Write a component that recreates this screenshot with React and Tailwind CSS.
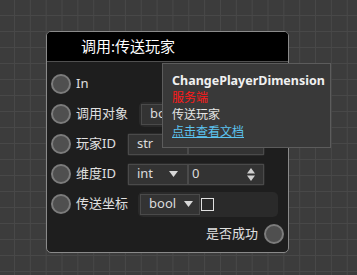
import React from 'react';

// one pin circle on the node edge
const Pin = () => (
  <div className="w-5 h-5 shrink-0 rounded-full border-2 border-[#7c7c7c] bg-[#4f4f4f]" />
);

const Caret = () => (
  <svg width="9" height="6" viewBox="0 0 9 6" className="shrink-0">
    <path d="M0 0 H9 L4.5 6 Z" fill="#d8d8d8" />
  </svg>
);

const Spinner = () => (
  <svg width="8" height="13" viewBox="0 0 8 13" className="shrink-0">
    <path d="M0 5.5 L4 0 L8 5.5 Z" fill="#d0d0d0" />
    <path d="M0 7.5 H8 L4 13 Z" fill="#d0d0d0" />
  </svg>
);

// two-part field: type dropdown + value
const TypeField = ({ type, value, spinner }) => (
  <div className="ml-[11px] flex h-[23px] w-[138px] rounded-[3px] bg-[#2a2a2a] p-[1px]">
    <div className="flex w-[60px] items-center justify-between border border-[#4a4a4a] bg-[#333333] pl-[8px] pr-[9px] text-[13px] text-[#dcdcdc]">
      <span>{type}</span>
      <Caret />
    </div>
    <div className="flex flex-1 items-center justify-between border border-[#4a4a4a] bg-[#333333] pl-[3px] pr-[8px] text-[13px] text-[#dcdcdc]">
      <span>{value}</span>
      {spinner && <Spinner />}
    </div>
  </div>
);

const BoolField = ({ ml }) => (
  <div className={`${ml} flex h-[25px] w-[140px] items-center rounded-[5px] bg-[#2a2a2a] pl-[2px]`}>
    <div className="flex h-[21px] w-[60px] items-center justify-between border border-[#4a4a4a] bg-[#333333] pl-[8px] pr-[6px] text-[13px] text-[#dcdcdc]">
      <span>bool</span>
      <Caret />
    </div>
    <div className="ml-[1px] h-[13px] w-[13px] border border-[#e0e0e0]" />
  </div>
);

const Row = ({ children }) => (
  <div className="flex h-[30px] items-center pl-[4px]">{children}</div>
);

export default function App() {
  return (
    <div className="relative h-[275px] w-full overflow-hidden bg-[#3c3c3c] bg-[linear-gradient(to_right,#484848_1px,transparent_1px),linear-gradient(to_bottom,#484848_1px,transparent_1px)] bg-[size:15.85px_16px] bg-[position:14px_15px] font-['Noto_Sans','Noto_Sans_CJK_SC',sans-serif]">
      {/* node */}
      <div className="absolute left-[46px] top-[31px] h-[222px] w-[243px] overflow-hidden rounded-[5px] border border-[#8a8a8a] bg-[#1e1e1e]">
        <div className="flex h-[30px] items-center border-b border-[#505050] bg-black pl-[34px] text-[15px] text-white">
          调用:传送玩家
        </div>
        <div className="pt-[7px] text-[13px] text-[#e0e0e0]">
          <Row>
            <Pin />
            <span className="ml-[5px]">In</span>
          </Row>
          <Row>
            <Pin />
            <span className="ml-[5px]">调用对象</span>
            <BoolField ml="ml-[11px]" />
          </Row>
          <Row>
            <Pin />
            <span className="ml-[5px]">玩家ID</span>
            <TypeField type="str" value="" />
          </Row>
          <Row>
            <Pin />
            <span className="ml-[5px]">维度ID</span>
            <TypeField type="int" value="0" spinner />
          </Row>
          <Row>
            <Pin />
            <span className="ml-[5px]">传送坐标</span>
            <BoolField ml="ml-[10px]" />
          </Row>
          <div className="flex h-[30px] items-center justify-end gap-[6px] pr-[4px]">
            <span>是否成功</span>
            <Pin />
          </div>
        </div>
      </div>

      {/* tooltip */}
      <div className="absolute left-[162px] top-[63px] h-[85px] w-[169px] border border-[#5c5c5c] bg-[#393939] pl-[9px] pt-[8px] text-[12px] leading-[17px]">
        <div className="text-[12.5px] font-bold text-[#f0f0f0]">ChangePlayerDimension</div>
        <div className="text-[#ff1a1a]">服务端</div>
        <div className="text-[#e6e6e6]">传送玩家</div>
        <div className="text-[#5cc3ef] underline">点击查看文档</div>
      </div>
    </div>
  );
}
